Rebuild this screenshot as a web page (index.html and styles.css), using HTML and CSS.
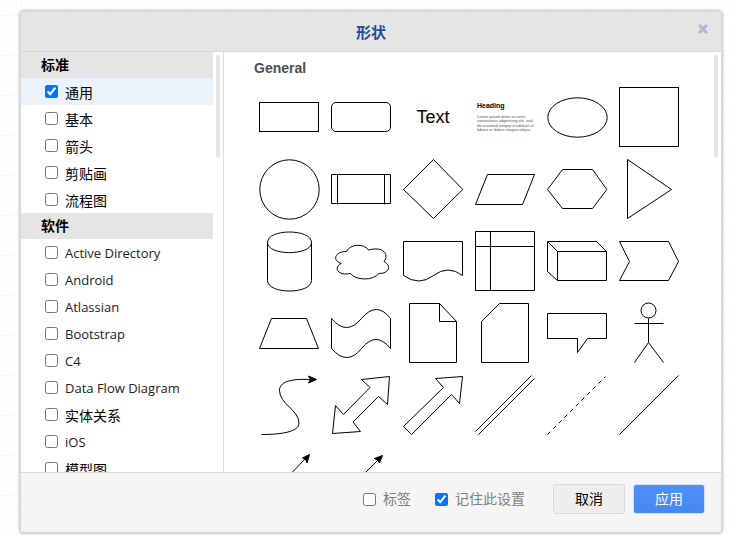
FILE: index.html
```html
<!DOCTYPE html>
<html lang="zh-CN">
<head>
    <meta charset="UTF-8">
    <meta name="viewport" content="width=device-width, initial-scale=1.0">
    <title>形状</title>
    <link rel="stylesheet" href="styles.css">
</head>
<body>

<div class="dialog" role="dialog" aria-labelledby="dialog-title">
    <div class="dialog-header">
        <h1 id="dialog-title">形状</h1>
        <button class="close" aria-label="关闭">
            <svg width="10" height="10" viewBox="0 0 10 10"><path d="M1 1L9 9M9 1L1 9"/></svg>
        </button>
    </div>

    <div class="dialog-body">
        <div class="sidebar">
            <div class="library-list">
                <h2>标准</h2>
                <label class="entry selected"><input type="checkbox" checked><span>通用</span></label>
                <label class="entry"><input type="checkbox"><span>基本</span></label>
                <label class="entry"><input type="checkbox"><span>箭头</span></label>
                <label class="entry"><input type="checkbox"><span>剪贴画</span></label>
                <label class="entry"><input type="checkbox"><span>流程图</span></label>
                <h2>软件</h2>
                <label class="entry"><input type="checkbox"><span lang="en">Active Directory</span></label>
                <label class="entry"><input type="checkbox"><span lang="en">Android</span></label>
                <label class="entry"><input type="checkbox"><span lang="en">Atlassian</span></label>
                <label class="entry"><input type="checkbox"><span lang="en">Bootstrap</span></label>
                <label class="entry"><input type="checkbox"><span lang="en">C4</span></label>
                <label class="entry"><input type="checkbox"><span lang="en">Data Flow Diagram</span></label>
                <label class="entry"><input type="checkbox"><span>实体关系</span></label>
                <label class="entry"><input type="checkbox"><span lang="en">iOS</span></label>
                <label class="entry"><input type="checkbox"><span>模型图</span></label>
            </div>
            <div class="scroll-thumb"></div>
        </div>

        <div class="preview">
            <h3>General</h3>
            <div class="shapes">
                <!-- row 1 -->
                <svg viewBox="0 0 72 72"><rect x="6.5" y="21.5" width="59" height="29"/></svg>
                <svg viewBox="0 0 72 72"><rect x="6.5" y="21.5" width="59" height="29" rx="4.5"/></svg>
                <div class="text-shape">Text</div>
                <div class="textbox-shape">
                    <svg viewBox="0 0 72 72">
                        <text class="tb-heading" x="8" y="27">Heading</text>
                        <text class="tb-line" x="8" y="37">Lorem ipsum dolor sit amet,</text>
                        <text class="tb-line" x="8" y="41">consectetur adipisicing elit, sed</text>
                        <text class="tb-line" x="8" y="46">do eiusmod tempor incididunt ut</text>
                        <text class="tb-line" x="8" y="50">labore et dolore magna aliqua.</text>
                    </svg>
                </div>
                <svg viewBox="0 0 72 72"><ellipse cx="36.5" cy="36.5" rx="29.7" ry="19.7"/></svg>
                <svg viewBox="0 0 72 72"><rect x="6.5" y="6.5" width="59" height="59"/></svg>

                <!-- row 2 -->
                <svg viewBox="0 0 72 72"><circle cx="36.5" cy="36.5" r="29.7"/></svg>
                <svg viewBox="0 0 72 72"><path d="M6.5 21.5H65.5V50.5H6.5ZM12.5 21.5V51.5M59.5 21.5V51.5"/></svg>
                <svg viewBox="0 0 72 72"><path d="M36.5 6.5L65.8 36.5L36.5 65.5L6.5 36.5Z"/></svg>
                <svg viewBox="0 0 72 72"><path d="M6.5 51.5L18.5 21.5H65.5L53.5 51.5Z"/></svg>
                <svg viewBox="0 0 72 72"><path d="M21.5 16.5H51.5L65.8 36.5L51.5 55.5H21.5L6.5 36.5Z"/></svg>
                <svg viewBox="0 0 72 72"><path d="M14.5 6.5L58.5 36.5L14.5 65.5Z"/></svg>

                <!-- row 3 -->
                <svg viewBox="0 0 72 72"><path d="M14.5 17.5C14.5 3.5 58.5 3.5 58.5 17.5V55.5C58.5 69.5 14.5 69.5 14.5 55.5ZM14.5 17.5C14.5 31 58.5 31 58.5 17.5"/></svg>
                <svg viewBox="0 0 72 72"><path d="M21.7 26.5C11 26 6 35 16.3 38.5C9 41 11 51.500 25.700 48.500C30 55.500 48 56 54 48.500C64 48.500 67 41 59 36.500C64.500 29 58 21 43.700 25C38 18 25 19 21.700 26.500Z"/></svg>
                <svg viewBox="0 0 72 72"><path d="M6.5 16.5H65.5V50.5Q51 39.5 36.5 50.5T6.5 50.5Z"/></svg>
                <svg viewBox="0 0 72 72"><path d="M6.5 6.5H65.5V65.5H6.5ZM6.5 21.5H65.5M21.5 6.5V65.5"/></svg>
                <svg viewBox="0 0 72 72"><path d="M6.5 16.5H55.5L65.5 26.5V55.5H16.5L6.5 46.5ZM6.5 16.5L16.5 26.5H65.5M16.5 26.5V55.5"/></svg>
                <svg viewBox="0 0 72 72"><path d="M6.5 16.5H55.5L65.5 36.5L55.5 55.5H6.5L16.5 36.5Z"/></svg>

                <!-- row 4 -->
                <svg viewBox="0 0 72 72"><path d="M6.5 51.5L18.5 21.5H53.5L65.5 51.5Z"/></svg>
                <svg viewBox="0 0 72 72"><path d="M6.5 21.5Q21.5 39.5 36.5 21.5T65.5 21.5V51.5Q51 33.5 36.5 51.5T6.5 51.5Z"/></svg>
                <svg viewBox="0 0 72 72"><path d="M12.5 6.5H42.5L59.5 24.5V65.5H12.5ZM42.5 6.5V24.5H59.5"/></svg>
                <svg viewBox="0 0 72 72"><path d="M30.5 6.5H59.5V65.5H12.5V24.5Z"/></svg>
                <svg viewBox="0 0 72 72"><path d="M6.5 16.5H65.5V41.5H46.5L36.5 55.5V41.5H6.5Z"/></svg>
                <svg viewBox="0 0 72 72"><circle cx="35.5" cy="13.5" r="7.5"/><path d="M35.5 21V45.5M21.5 26.5H50.5M35.5 45.5L21.5 65.5M35.5 45.5L50.5 65.5"/></svg>

                <!-- row 5 -->
                <svg viewBox="0 0 72 72"><path d="M8.5 65.5C28 65.5 46 63 46 54C46 41 26.5 35 26.5 21.5C26.5 13 37 9.5 57 10.5"/><path class="solid" d="M63.5 10.5L55.5 14L57.5 10.5L55.5 7Z"/></svg>
                <svg viewBox="0 0 72 72"><path d="M36.5 10.5L64.5 7.5L62.5 35.5L53.5 27.5L28 53L35.5 62.5L7.5 64.5L10.5 36.5L18.5 45.5L45 18.5Z"/></svg>
                <svg viewBox="0 0 72 72"><path d="M38.5 9.5L65.5 7.5L62.5 34.5L54.5 25.5L14.5 65.5L6.5 57.5L46.5 18.5Z"/></svg>
                <svg viewBox="0 0 72 72"><path d="M6.5 62.5L62.5 6.5M9.5 65.5L65.5 9.5"/></svg>
                <svg viewBox="0 0 72 72"><path stroke-dasharray="4 4" d="M6.5 65.5L64.5 7.5"/></svg>
                <svg viewBox="0 0 72 72"><path d="M6.5 65.5L65.5 6.5"/></svg>

                <!-- row 6 -->
                <svg viewBox="0 0 72 72"><path d="M6.5 65.5L52 18"/><path class="solid" d="M56.5 13.5L54 22L52.5 18L49.5 17Z"/></svg>
                <svg viewBox="0 0 72 72"><path d="M6.5 65.5L53 19"/><path class="solid" d="M57.5 14.5L54.5 22L53 19L49.5 17.5Z"/></svg>
            </div>
            <div class="scroll-thumb"></div>
        </div>
    </div>

    <div class="dialog-footer">
        <label class="option"><input type="checkbox"><span>标签</span></label>
        <label class="option"><input type="checkbox" checked><span>记住此设置</span></label>
        <button class="btn">取消</button>
        <button class="btn primary">应用</button>
    </div>
</div>

</body>
</html>
```
FILE: styles.css
```css
* {
    box-sizing: border-box;
}
body {
    margin: 0;
    height: 100vh;
    padding: 10px 9px 1px 19px;
    overflow: hidden;
    font-family: "Noto Sans CJK SC", sans-serif;
    font-size: 14px;
    color: #000;
    background-color: #fff;
    background-image:
        linear-gradient(#f8f8f8 1px, transparent 1px),
        linear-gradient(90deg, #f8f8f8 1px, transparent 1px),
        linear-gradient(#fdfdfd 1px, transparent 1px),
        linear-gradient(90deg, #fdfdfd 1px, transparent 1px);
    background-size: 40px 40px, 40px 40px, 10px 10px, 10px 10px;
    background-position: 0 15px, 21px 0, 0 5px, 1px 0;
}
h1, h2, h3 {
    margin: 0;
}
input[type="checkbox"] {
    width: 13px;
    height: 13px;
    margin: 0;
    flex: none;
}

.dialog {
    display: flex;
    flex-direction: column;
    height: 100%;
    border: 2px solid #d8d9dc;
    border-radius: 5px;
    background-color: #fff;
    box-shadow: 0 0 2px 1px #e2e2e2;
    overflow: hidden;
}

/* header */
.dialog-header {
    position: relative;
    flex: none;
    height: 40px;
    border-bottom: 1px solid #d8d9dc;
    background-color: #e5e5e5;
    text-align: center;
}
.dialog-header h1 {
    font-size: 15px;
    line-height: 40px;
    color: #1f4f93;
}
.close {
    position: absolute;
    top: 12px;
    right: 13px;
    display: flex;
    padding: 0;
    border: none;
    background: none;
    cursor: pointer;
}
.close svg {
    stroke: #a9bcd6;
    stroke-width: 3;
}

/* library list */
.dialog-body {
    display: flex;
    flex: 1;
    min-height: 0;
}
.sidebar {
    position: relative;
    flex: none;
    width: 203px;
    padding-right: 10px;
    border-right: 1px solid #d8d9dc;
    overflow: hidden;
}
.library-list h2 {
    height: 26px;
    padding-left: 20px;
    font-size: 14px;
    line-height: 24px;
    background-color: #e5e5e5;
}
.entry {
    display: flex;
    align-items: center;
    gap: 7px;
    height: 27px;
    padding-left: 24px;
    cursor: pointer;
}
.entry span {
    padding-top: 1px;
    line-height: 24px;
}
.entry span:lang(en) {
    font-family: "Open Sans", sans-serif;
    font-size: 13px;
    color: #222;
}
.selected {
    background-color: #ebf2f9;
}
.scroll-thumb {
    position: absolute;
    top: 3px;
    right: 3px;
    width: 4px;
    height: 103px;
    border-radius: 2px;
    background-color: #e5e5e5;
}

/* shape preview */
.preview {
    position: relative;
    flex: 1;
    min-width: 0;
    padding-left: 29px;
    overflow: hidden;
}
.preview h3 {
    padding: 4px 1px 1px;
    font-family: "Liberation Sans", Arial, sans-serif;
    font-size: 14px;
    line-height: 24px;
    color: #505050;
}
.shapes {
    display: grid;
    grid-template-columns: repeat(6, 72px);
    grid-auto-rows: 72px;
}
.shapes svg {
    display: block;
    width: 72px;
    height: 72px;
    fill: none;
    stroke: #000;
    stroke-width: 1;
}
.shapes .solid {
    fill: #000;
}
.text-shape {
    font-family: "Liberation Sans", Arial, sans-serif;
    font-size: 18px;
    line-height: 72px;
    text-align: center;
}
.textbox-shape text {
    font-family: "Liberation Sans", Arial, sans-serif;
    stroke: none;
}
.textbox-shape .tb-heading {
    font-size: 7px;
    font-weight: bold;
    fill: #000;
}
.textbox-shape .tb-line {
    font-size: 4px;
    fill: #555;
}

/* footer */
.dialog-footer {
    display: flex;
    flex: none;
    align-items: center;
    justify-content: flex-end;
    gap: 8px;
    height: 60px;
    padding: 0 16px 7px 0;
    border-top: 1px solid #d8d9dc;
    background-color: #f5f5f5;
}
.option {
    display: flex;
    align-items: center;
    gap: 7px;
    margin-right: 16px;
    color: #808080;
}
.option span {
    padding-bottom: 2px;
}
.option + .btn {
    margin-left: 4px;
}
.btn {
    width: 72px;
    height: 30px;
    padding: 0 0 2px;
    border: 1px solid #d8d9dc;
    border-radius: 3px;
    font-family: inherit;
    font-size: 14px;
    color: #000;
    background-color: #eee;
    cursor: pointer;
}
.primary {
    border-color: #d4dff2;
    color: #fff;
    background: linear-gradient(#4d90fe, #4787ed);
}
```
